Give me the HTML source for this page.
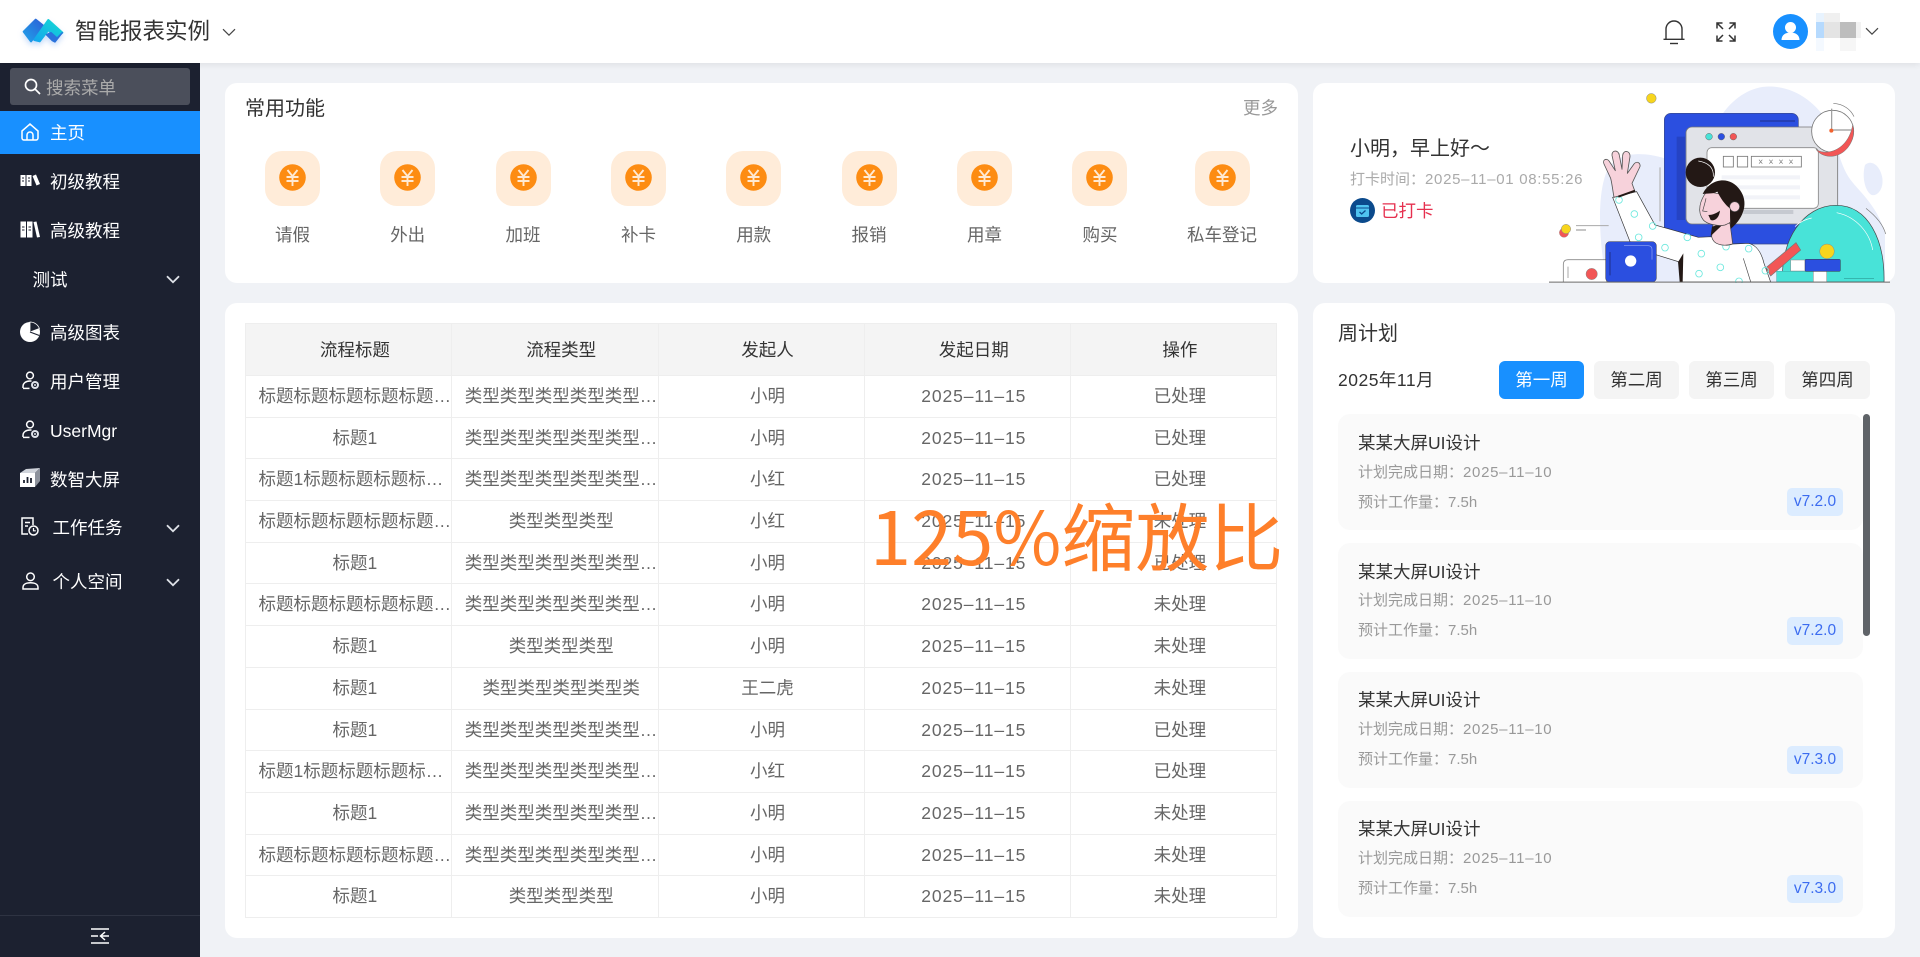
<!DOCTYPE html>
<html lang="zh">
<head>
<meta charset="utf-8">
<title>智能报表实例</title>
<style>
*{box-sizing:border-box;margin:0;padding:0}
html,body{width:1920px;height:957px;overflow:hidden;background:#f0f2f6;font-family:"Liberation Sans","Noto Sans CJK SC",sans-serif;color:#333}
.t{position:absolute;white-space:nowrap;line-height:30px;height:30px;font-size:17.5px}
.abs{position:absolute}
#hd{position:absolute;left:0;top:0;width:1920px;height:63px;background:#fff;box-shadow:0 2px 6px rgba(0,0,0,.07);z-index:3}
#sb{position:absolute;left:0;top:63px;width:200px;height:894px;background:#1c2130;z-index:2}
.card{position:absolute;background:#fff;border-radius:12px}
.m{color:#fff}
.ic{position:absolute;display:block;overflow:visible}
.fb{position:absolute;top:151px;width:55px;height:55px;border-radius:17px;background:#ffecd9}
.fl{position:absolute;top:220px;width:120px;text-align:center;line-height:30px;font-size:17.5px;color:#666;white-space:nowrap}
#tb{position:absolute;left:245px;top:323px;width:1032px;border:1px solid #eee;border-bottom:0;font-size:17.5px;color:#666}
.r{display:grid;grid-template-columns:206.3px 206.3px 206.3px 206.3px 204.8px;height:41.69px;border-bottom:1px solid #eee}
.r span{display:block;padding-left:12.5px;text-align:center;line-height:41.5px;white-space:nowrap;overflow:hidden;text-overflow:ellipsis;border-right:1px solid #eee}
.r span:last-child{border-right:0}
.r.h{height:52px;background:#f4f4f4;color:#333}
.r.h span{line-height:53px}
.d{letter-spacing:.9px}
.wk{position:absolute;top:361px;height:38px;width:85px;border-radius:6px;background:#f4f4f4;text-align:center;line-height:39px;font-size:17.5px;color:#333}
.pc{position:absolute;left:1338px;width:525px;height:116px;background:#fafafa;border-radius:12px}
.pc b{position:absolute;left:20px;top:14px;font-weight:400;font-size:17.5px;line-height:28px;color:#333;white-space:nowrap}
.pc i{position:absolute;left:20px;font-style:normal;font-size:15px;line-height:24px;color:#999;white-space:nowrap}
.pc u{position:absolute;left:449px;top:74px;width:56px;height:28px;border-radius:5px;background:#dcecff;color:#3c6cf0;text-decoration:none;text-align:center;font-size:15.5px;line-height:28px}
.ms{position:absolute}
</style>
</head>
<body>
<svg width="0" height="0" style="position:absolute">
<defs>
<linearGradient id="lg1" x1="0" y1="1" x2="1" y2="0"><stop offset="0" stop-color="#1fa2ea"/><stop offset="1" stop-color="#2d5fd6"/></linearGradient>
<linearGradient id="lg2" x1="0" y1="1" x2="1" y2="0"><stop offset="0" stop-color="#14a4ee"/><stop offset="1" stop-color="#14dcd2"/></linearGradient>
<symbol id="coin" viewBox="0 0 27 27"><circle cx="13.5" cy="13.5" r="13.3" fill="#fd8c12"/><path d="M8.5 6l5 6.2 5-6.2M7.5 13h12M7.5 17h12M13.5 12v10" fill="none" stroke="#ffe9d2" stroke-width="1.9"/></symbol>
<symbol id="usr" viewBox="0 0 18 19"><circle cx="8" cy="4.5" r="3.4" fill="none" stroke="#fff" stroke-width="1.5"/><path d="M1 17v-1.5C1 12 4 10 8 10h1.5" fill="none" stroke="#fff" stroke-width="1.5"/><path d="M1 17.4h6.5" stroke="#fff" stroke-width="1.5"/><circle cx="13" cy="14" r="4" fill="#dfe3ea"/><circle cx="13" cy="14" r="2" fill="#1c2130"/><circle cx="13" cy="14" r="1" fill="#dfe3ea"/></symbol>
<symbol id="chev" viewBox="0 0 14 9"><path d="M1 1.2l6 6 6-6" fill="none" stroke="#dfe2e8" stroke-width="1.8"/></symbol>
<symbol id="chevd" viewBox="0 0 14 9"><path d="M1 1.2l6 6 6-6" fill="none" stroke="#444" stroke-width="1.2"/></symbol>
</defs>
</svg>

<div id="hd">
  <svg class="ic" style="left:15px;top:10px;filter:drop-shadow(0 3px 3px rgba(70,140,240,.3))" width="60" height="45" viewBox="0 0 180 135">
    <path d="M26 65L62 29 86 48 48 94Z" fill="url(#lg1)" stroke="url(#lg1)" stroke-width="6" stroke-linejoin="round"/>
    <path d="M58 90L100 30 142 68 124 84 100 60 74 94Z" fill="url(#lg2)" stroke="url(#lg2)" stroke-width="6" stroke-linejoin="round"/>
    <path d="M108 68L126 84 142 68 120 96 112 92 94 74Z" fill="#2a72dc" stroke="#2a72dc" stroke-width="4" stroke-linejoin="round"/>
  </svg>
  <div class="t" style="left:75px;top:17px;font-size:22.5px;color:#333">智能报表实例</div>
  <svg class="ic" style="left:222px;top:28px" width="14" height="9"><use href="#chevd"/></svg>
  <svg class="ic" style="left:1662px;top:19px" width="24" height="26" viewBox="0 0 24 26" fill="none" stroke="#333" stroke-width="1.4"><path d="M4 20V10a8 8 0 0 1 16 0v10"/><path d="M1.5 20.3h21"/><path d="M8 24.5h8"/></svg>
  <svg class="ic" style="left:1716px;top:22px" width="20" height="20" viewBox="0 0 20 20" fill="none" stroke="#333" stroke-width="1.5"><path d="M1 6.5V1h5.5M1 1l6 6M13.5 1H19v5.5M19 1l-6 6M1 13.5V19h5.5M1 19l6-6M13.5 19H19v-5.5M19 19l-6-6"/></svg>
  <svg class="ic" style="left:1773px;top:14px" width="35" height="35" viewBox="0 0 35 35"><circle cx="17.5" cy="17.5" r="17.5" fill="#1890ff"/><circle cx="17.5" cy="13.5" r="5.5" fill="#fff"/><path d="M8.5 26c0-5 4-7.5 9-7.5s9 2.500 9 7.500z" fill="#fff"/></svg>
  <div class="ms" style="left:1816px;top:13px;width:8px;height:9px;background:#e8f3fe"></div>
  <div class="ms" style="left:1824px;top:13px;width:16px;height:9px;background:#f0f0f0"></div>
  <div class="ms" style="left:1816px;top:22px;width:8px;height:16px;background:#b6dafe"></div>
  <div class="ms" style="left:1824px;top:22px;width:16px;height:16px;background:#e4e4e4"></div>
  <div class="ms" style="left:1840px;top:22px;width:16px;height:16px;background:#bdbdbd"></div>
  <div class="ms" style="left:1856px;top:22px;width:5px;height:16px;background:#f2f2f2"></div>
  <div class="ms" style="left:1816px;top:38px;width:8px;height:13px;background:#f4f9ff"></div>
  <div class="ms" style="left:1840px;top:38px;width:16px;height:13px;background:#f6f6f6"></div>
  <svg class="ic" style="left:1865px;top:27px" width="14" height="9"><use href="#chevd"/></svg>
</div>

<div id="sb"></div>
<div style="position:absolute;left:0;top:0;z-index:4">
  <div class="abs" style="left:10px;top:68px;width:180px;height:37px;background:#4b4f5b;border-radius:3px"></div>
  <svg class="ic" style="left:24px;top:78px" width="17" height="17" viewBox="0 0 17 17" fill="none" stroke="#fff" stroke-width="1.7"><circle cx="7" cy="7" r="5.5"/><path d="M11 11l5 5"/></svg>
  <div class="t" style="left:46px;top:73px;color:#aaa">搜索菜单</div>
  <div class="abs" style="left:0;top:111px;width:200px;height:43px;background:#1890ff"></div>
  <svg class="ic" style="left:21px;top:123px" width="18" height="18" viewBox="0 0 18 18" fill="none" stroke="#fff" stroke-width="1.5"><path d="M1 8l8-7 8 7v7a2 2 0 0 1-2 2H3a2 2 0 0 1-2-2z"/><path d="M6 17v-5a3 3 0 0 1 6 0v5"/></svg>
  <div class="t m" style="left:50px;top:118px">主页</div>

  <svg class="ic" style="left:20px;top:174px" width="20" height="13" viewBox="0 0 20 13"><rect x="0.500" y="1" width="5" height="11" fill="#fff"/><rect x="6.500" y="1" width="5" height="11" fill="#fff"/><path d="M2 4h2M8 4h2M2 7h2M8 7h2" stroke="#1c2130" stroke-width="1"/><path d="M12.500 2l3.500-1.500 4 9.500-3.500 1.500z" fill="#fff"/></svg>
  <div class="t m" style="left:50px;top:167px">初级教程</div>

  <svg class="ic" style="left:20px;top:221px" width="20" height="17" viewBox="0 0 20 17"><rect x="0.500" y="0.500" width="5.500" height="16" fill="#fff"/><rect x="7" y="0.500" width="5.500" height="16" fill="#fff"/><path d="M2 6h2.500M2 9h2.500M8.500 6h2.500M8.500 9h2.500" stroke="#1c2130" stroke-width="1"/><path d="M13.500 1l3-.5 3.500 15.500-3 .5z" fill="#fff"/></svg>
  <div class="t m" style="left:50px;top:216px">高级教程</div>

  <div class="t m" style="left:32.500px;top:265px">测试</div>
  <svg class="ic" style="left:166px;top:275px" width="14" height="9"><use href="#chev"/></svg>

  <svg class="ic" style="left:20px;top:322px" width="20" height="20" viewBox="0 0 20 20"><circle cx="10" cy="10" r="10" fill="#fff"/><path d="M10 10V0a10 10 0 0 1 9.400 6.500z" fill="#1c2130" stroke="#fff" stroke-width=".8"/><path d="M10 10l9.300 3.500" stroke="#1c2130" stroke-width="1.200"/></svg>
  <div class="t m" style="left:50px;top:318px">高级图表</div>

  <svg class="ic" style="left:22px;top:371px" width="18" height="19"><use href="#usr"/></svg>
  <div class="t m" style="left:50px;top:367px">用户管理</div>

  <svg class="ic" style="left:22px;top:420px" width="18" height="19"><use href="#usr"/></svg>
  <div class="t m" style="left:50px;top:416px">UserMgr</div>

  <svg class="ic" style="left:20px;top:468px" width="20" height="20" viewBox="0 0 20 20"><path d="M0 5L6 1 20 0 15 5z" fill="#cfd3da"/><rect x="0" y="5" width="15" height="14" fill="#fff"/><path d="M15 5l5-5v13l-5 6z" fill="#8d929c"/><path d="M4 15v-3M7.500 15V9M11 15v-5" stroke="#1c2130" stroke-width="1.800"/></svg>
  <div class="t m" style="left:50px;top:465px">数智大屏</div>

  <svg class="ic" style="left:21px;top:517px" width="18" height="19" viewBox="0 0 18 19" fill="none" stroke="#fff" stroke-width="1.500"><path d="M7 17H1V1h11v7"/><path d="M4 5.500h5M4 9h3"/><circle cx="12.500" cy="13.500" r="4.500"/><path d="M12.500 11v2.800h2.300" stroke-width="1.200"/></svg>
  <div class="t m" style="left:52.500px;top:513px">工作任务</div>
  <svg class="ic" style="left:166px;top:524px" width="14" height="9"><use href="#chev"/></svg>

  <svg class="ic" style="left:22px;top:572px" width="17" height="18" viewBox="0 0 17 18" fill="none" stroke="#fff" stroke-width="1.500"><circle cx="8.500" cy="4.800" r="3.800"/><path d="M1 17v-1.500C1 12.500 4 10.800 8.500 10.800S16 12.500 16 15.500V17z"/></svg>
  <div class="t m" style="left:52.500px;top:566.500px">个人空间</div>
  <svg class="ic" style="left:166px;top:578px" width="14" height="9"><use href="#chev"/></svg>

  <div class="abs" style="left:0;top:915px;width:200px;height:1px;background:#2e3342"></div>
  <svg class="ic" style="left:91px;top:928px" width="18" height="16" viewBox="0 0 18 16" fill="none" stroke="#fff" stroke-width="1.500"><path d="M0 1h18M0 15h18M0 8h7"/><path d="M14 4l-4.500 4 4.500 4M10 8h8"/></svg>
</div>

<div class="card" style="left:225px;top:83px;width:1073px;height:200px"></div>
<div class="t" style="left:245px;top:94px;font-size:20px">常用功能</div>
<div class="t" style="left:1243px;top:93px;color:#999">更多</div>

<div class="fb" style="left:265px"></div><svg class="ic" style="left:279px;top:164px" width="27" height="27"><use href="#coin"/></svg><div class="fl" style="left:232.500px">请假</div>
<div class="fb" style="left:380px"></div><svg class="ic" style="left:394px;top:164px" width="27" height="27"><use href="#coin"/></svg><div class="fl" style="left:347.700px">外出</div>
<div class="fb" style="left:496px"></div><svg class="ic" style="left:510px;top:164px" width="27" height="27"><use href="#coin"/></svg><div class="fl" style="left:463px">加班</div>
<div class="fb" style="left:611px"></div><svg class="ic" style="left:625px;top:164px" width="27" height="27"><use href="#coin"/></svg><div class="fl" style="left:578.500px">补卡</div>
<div class="fb" style="left:726px"></div><svg class="ic" style="left:740px;top:164px" width="27" height="27"><use href="#coin"/></svg><div class="fl" style="left:693.700px">用款</div>
<div class="fb" style="left:842px"></div><svg class="ic" style="left:856px;top:164px" width="27" height="27"><use href="#coin"/></svg><div class="fl" style="left:809px">报销</div>
<div class="fb" style="left:957px"></div><svg class="ic" style="left:971px;top:164px" width="27" height="27"><use href="#coin"/></svg><div class="fl" style="left:924.500px">用章</div>
<div class="fb" style="left:1072px"></div><svg class="ic" style="left:1086px;top:164px" width="27" height="27"><use href="#coin"/></svg><div class="fl" style="left:1040px">购买</div>
<div class="fb" style="left:1195px"></div><svg class="ic" style="left:1209px;top:164px" width="27" height="27"><use href="#coin"/></svg><div class="fl" style="left:1162px">私车登记</div>

<div class="card" style="left:1313px;top:83px;width:582px;height:200px"></div>
<div class="t" style="left:1350px;top:134px;font-size:20px;color:#333">小明，早上好～</div>
<div class="t" style="left:1350px;top:165px;font-size:15px;color:#aaa">打卡时间：<span style="letter-spacing:.7px">2025–11–01 08:55:26</span></div>
<svg class="ic" style="left:1350px;top:198px" width="25" height="25" viewBox="0 0 25 25"><circle cx="12.500" cy="12.500" r="12.500" fill="#0b4a8c"/><rect x="6" y="7" width="13" height="12" rx="1.500" fill="#4fc3f0"/><path d="M6 10h13" stroke="#0b4a8c" stroke-width="1"/><path d="M9.500 14l2.200 2 3.800-3.500" fill="none" stroke="#0b4a8c" stroke-width="1.300"/></svg>
<div class="t" style="left:1381px;top:196px;color:#e6304f">已打卡</div>

<svg class="ic" style="left:1540px;top:80px" width="360" height="210" viewBox="0 0 1080 630">
  <path d="M545 105C590 40 650 15 700 20C770 25 830 70 865 130C890 175 890 230 925 290C950 330 1010 370 1035 460L1035 606L200 606C175 480 170 330 205 265C235 215 310 215 375 235C430 220 500 165 545 105Z" fill="#e8edfb"/>
  <path d="M975 255C990 240 1015 250 1025 285C1035 320 1015 350 995 345C975 335 965 290 975 255Z" fill="#e8edfb"/>
  <circle cx="334" cy="55" r="14.500" fill="#f7d51d" stroke="#888" stroke-width="1.500"/>
  <rect x="373" y="100" width="402" height="392" rx="20" fill="#2b4fe0" stroke="#3a4a8a" stroke-width="2"/>
  <path d="M660 123h105" stroke="#1f2f8a" stroke-width="3"/>
  <rect x="438" y="141" width="455" height="291" rx="18" fill="#e1e3e8" stroke="#777" stroke-width="2.500"/>
  <circle cx="507" cy="170" r="10" fill="#48e3d8" stroke="#666" stroke-width="1.500"/>
  <circle cx="544" cy="170" r="10" fill="#2b4fe0" stroke="#666" stroke-width="1.500"/>
  <circle cx="580" cy="170" r="10" fill="#f25656" stroke="#666" stroke-width="1.500"/>
  <rect x="501" y="203" width="334" height="182" rx="14" fill="#fff" stroke="#888" stroke-width="2.500"/>
  <g fill="#fff" stroke="#777" stroke-width="2.500"><rect x="550" y="229" width="30" height="32"/><rect x="592" y="229" width="31" height="32"/><rect x="634" y="229" width="150" height="32"/></g>
  <path d="M657 239l10 12m0-12l-10 12M688 239l10 12m0-12l-10 12M718 239l10 12m0-12l-10 12M748 239l10 12m0-12l-10 12" stroke="#777" stroke-width="2"/>
  <g fill="#f2f3f8"><rect x="545" y="286" width="235" height="12"/><rect x="545" y="316" width="235" height="12"/><rect x="545" y="346" width="235" height="12"/></g>
  <rect x="610" y="390" width="150" height="12" fill="#c6c9d0"/>
  <rect x="410" y="170" width="25" height="250" fill="#2543c4"/>
  <path d="M360 262v162" stroke="#aaa" stroke-width="3"/>
  <circle cx="878" cy="154" r="63" fill="#fff" stroke="#777" stroke-width="2.500"/>
  <path d="M938 135C950 170 925 225 875 229C850 230 835 218 828 208C860 230 925 210 938 135Z" fill="#f25656" stroke="#777" stroke-width="1.500"/>
  <path d="M875 86v66M875 150h60" stroke="#999" stroke-width="3.500"/>
  <circle cx="874" cy="152" r="6" fill="#f2622e"/>
  <path d="M880 70C910 72 932 88 942 110" fill="none" stroke="#777" stroke-width="2"/>
  <path d="M728 606C720 480 790 376 888 376C985 376 1035 480 1032 606Z" fill="#48e3d8" stroke="#444" stroke-width="2"/>
  <path d="M890 398C950 410 990 460 998 510M765 440C780 425 795 418 815 414" fill="none" stroke="#fff" stroke-width="2"/>
  <path d="M978 385C1010 410 1030 435 1037 462" fill="none" stroke="#777" stroke-width="2"/>
  <path d="M912 595h90" stroke="#2a9c95" stroke-width="2"/>
  <path d="M678 563L768 488 782 510 692 588Z" fill="#f25656" stroke="#777" stroke-width="2"/>
  <rect x="710" y="574" width="110" height="32" fill="#48e3d8" stroke="#3aa" stroke-width="1.500"/>
  <rect x="820" y="574" width="40" height="32" fill="#fff" stroke="#888" stroke-width="1.500"/>
  <rect x="752" y="540" width="45" height="33" fill="#fff" stroke="#888" stroke-width="1.500"/>
  <rect x="795" y="538" width="106" height="36" rx="3" fill="#2b4fe0" stroke="#334" stroke-width="1.500"/>
  <circle cx="861" cy="514" r="22" fill="#f7d51d" stroke="#888" stroke-width="1.500"/>
  <path d="M218 352L290 335 345 435 475 472 515 470C525 495 560 500 578 492L625 490C650 495 665 520 672 550L692 606H420L415 545 350 525 270 485Z" fill="#fff" stroke="#333" stroke-width="2"/>
  <path d="M430 520L415 545 420 606 428 606Z" fill="#231815"/>
  <path d="M610 535l22 70" stroke="#444" stroke-width="2" fill="none"/>
  <g fill="none" stroke="#6de8de" stroke-width="2.500"><circle cx="237" cy="360" r="10"/><circle cx="283" cy="402" r="10"/><circle cx="296" cy="472" r="10"/><circle cx="338" cy="438" r="10"/><circle cx="375" cy="503" r="10"/><circle cx="442" cy="472" r="10"/><circle cx="484" cy="521" r="10"/><circle cx="541" cy="562" r="10"/><circle cx="477" cy="581" r="10"/><circle cx="626" cy="506" r="10"/><circle cx="558" cy="500" r="10"/><circle cx="597" cy="604" r="10"/><circle cx="676" cy="572" r="10"/></g>
  <path d="M222 352C218 330 216 310 212 295L192 252C186 240 200 232 208 244L226 272 216 226C214 210 236 208 238 226L246 268 248 226C250 208 272 212 270 230L262 280 282 252C292 240 306 252 298 264L276 310 285 335Z" fill="#f7d2db" stroke="#555" stroke-width="2.500" stroke-linejoin="round"/>
  <path d="M235 350L285 332" stroke="#231815" stroke-width="6"/>
  <path d="M520 425L515 470C520 495 550 500 578 492L570 430Z" fill="#f7d2db" stroke="#444" stroke-width="2"/>
  <path d="M516 440L512 468 552 430Z" fill="#231815"/>
  <path d="M500 335C480 360 470 395 490 420C500 432 535 440 555 435C585 425 600 390 590 350Z" fill="#f7d2db" stroke="#444" stroke-width="2"/>
  <circle cx="481" cy="277" r="44" fill="#231815"/>
  <path d="M475 243C505 248 522 262 520 290" fill="none" stroke="#fff" stroke-width="2"/>
  <path d="M488 342C510 295 570 285 600 330C625 365 615 410 572 447C570 425 570 400 570 385C555 375 540 352 532 335C520 342 505 340 488 342Z" fill="#231815"/>
  <circle cx="584" cy="380" r="15" fill="#f7d2db" stroke="#444" stroke-width="2"/>
  <path d="M505 405C520 405 532 398 540 392C538 412 525 425 512 420Z" fill="#231815"/>
  <path d="M498 355C495 370 490 385 488 393L502 395" fill="none" stroke="#444" stroke-width="2"/>
  <path d="M70 606V553Q70 539 84 539H200V606" fill="#fff" stroke="#888" stroke-width="2.500"/>
  <path d="M84 560v34" stroke="#999" stroke-width="2.500"/>
  <circle cx="155" cy="582" r="17" fill="#f25656" stroke="#888" stroke-width="1.500"/>
  <rect x="197" y="485" width="152" height="121" rx="12" fill="#2b4fe0" stroke="#334" stroke-width="1.500"/>
  <path d="M252 497h72q12 0 12 12v30" fill="none" stroke="#93a6f2" stroke-width="2"/>
  <path d="M210 516v70" stroke="#1f2f8a" stroke-width="3"/>
  <circle cx="272" cy="543" r="17" fill="#fff"/>
  <circle cx="72" cy="458" r="14" fill="#f25656" stroke="#888" stroke-width="1"/>
  <circle cx="78" cy="447" r="14" fill="#f7d51d" stroke="#888" stroke-width="1.500"/>
  <path d="M108 437h98" stroke="#aaa" stroke-width="3"/>
  <path d="M108 450h30" stroke="#aaa" stroke-width="4"/>
  <path d="M27 606.500H1050" stroke="#666" stroke-width="3"/>
</svg>
<div class="abs" style="left:1895px;top:83px;width:8px;height:210px;background:#f0f2f6"></div>
<div class="abs" style="left:1530px;top:283px;width:375px;height:10px;background:#f0f2f6"></div>

<div class="card" style="left:225px;top:303px;width:1073px;height:635px"></div>
<div id="tb">
  <div class="r h"><span>流程标题</span><span>流程类型</span><span>发起人</span><span>发起日期</span><span>操作</span></div>
  <div class="r"><span>标题标题标题标题标题标题标题标题</span><span>类型类型类型类型类型类型类型类型</span><span>小明</span><span class="d">2025–11–15</span><span>已处理</span></div>
  <div class="r"><span>标题1</span><span>类型类型类型类型类型类型类型类型</span><span>小明</span><span class="d">2025–11–15</span><span>已处理</span></div>
  <div class="r"><span>标题1标题标题标题标题标题标题标题</span><span>类型类型类型类型类型类型类型类型</span><span>小红</span><span class="d">2025–11–15</span><span>已处理</span></div>
  <div class="r"><span>标题标题标题标题标题标题标题标题</span><span>类型类型类型</span><span>小红</span><span class="d">2025–11–15</span><span>未处理</span></div>
  <div class="r"><span>标题1</span><span>类型类型类型类型类型类型类型类型</span><span>小明</span><span class="d">2025–11–15</span><span>已处理</span></div>
  <div class="r"><span>标题标题标题标题标题标题标题标题</span><span>类型类型类型类型类型类型类型类型</span><span>小明</span><span class="d">2025–11–15</span><span>未处理</span></div>
  <div class="r"><span>标题1</span><span>类型类型类型</span><span>小明</span><span class="d">2025–11–15</span><span>未处理</span></div>
  <div class="r"><span>标题1</span><span>类型类型类型类型类</span><span>王二虎</span><span class="d">2025–11–15</span><span>未处理</span></div>
  <div class="r"><span>标题1</span><span>类型类型类型类型类型类型类型类型</span><span>小明</span><span class="d">2025–11–15</span><span>已处理</span></div>
  <div class="r"><span>标题1标题标题标题标题标题标题标题</span><span>类型类型类型类型类型类型类型类型</span><span>小红</span><span class="d">2025–11–15</span><span>已处理</span></div>
  <div class="r"><span>标题1</span><span>类型类型类型类型类型类型类型类型</span><span>小明</span><span class="d">2025–11–15</span><span>未处理</span></div>
  <div class="r"><span>标题标题标题标题标题标题标题标题</span><span>类型类型类型类型类型类型类型类型</span><span>小明</span><span class="d">2025–11–15</span><span>未处理</span></div>
  <div class="r"><span>标题1</span><span>类型类型类型</span><span>小明</span><span class="d">2025–11–15</span><span>未处理</span></div>
</div>

<div class="card" style="left:1313px;top:303px;width:582px;height:635px"></div>
<div class="t" style="left:1338px;top:319px;font-size:20px">周计划</div>
<div class="t" style="left:1338px;top:365px;letter-spacing:.5px">2025年11月</div>
<div class="wk" style="left:1499px;background:#1890ff;color:#fff">第一周</div>
<div class="wk" style="left:1594px">第二周</div>
<div class="wk" style="left:1689px">第三周</div>
<div class="wk" style="left:1785px">第四周</div>

<div class="pc" style="top:414px"><b style="top:15px">某某大屏UI设计</b><i style="top:47px">计划完成日期：<span style="letter-spacing:.7px">2025–11–10</span></i><i style="top:77px">预计工作量：7.5h</i><u>v7.2.0</u></div>
<div class="pc" style="top:543px"><b style="top:15px">某某大屏UI设计</b><i style="top:46px">计划完成日期：<span style="letter-spacing:.7px">2025–11–10</span></i><i style="top:76px">预计工作量：7.5h</i><u>v7.2.0</u></div>
<div class="pc" style="top:672px"><b>某某大屏UI设计</b><i style="top:46px">计划完成日期：<span style="letter-spacing:.7px">2025–11–10</span></i><i style="top:76px">预计工作量：7.5h</i><u>v7.3.0</u></div>
<div class="pc" style="top:801px"><b>某某大屏UI设计</b><i style="top:46px">计划完成日期：<span style="letter-spacing:.7px">2025–11–10</span></i><i style="top:76px">预计工作量：7.5h</i><u>v7.3.0</u></div>
<div class="abs" style="left:1863px;top:414px;width:7px;height:222px;border-radius:3.500px;background:#5f6368"></div>

<div class="abs" style="left:870px;top:489px;font-size:74px;line-height:90px;color:#fe7f2a;white-space:nowrap;font-family:'Noto Sans CJK SC',sans-serif;z-index:5">125%缩放比</div>
</body>
</html>
